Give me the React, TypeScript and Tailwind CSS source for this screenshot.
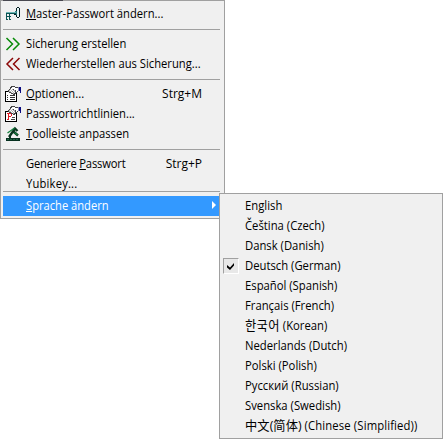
import type { ReactNode } from "react";

function KeyIcon() {
  return (
    <svg width="16" height="16" viewBox="0 0 16 16" shapeRendering="crispEdges">
      <path d="M1 6H11V7H1Z" fill="#6fb5b5" />
      <path d="M1 7H11V8H1Z" fill="#0b5555" />
      <path d="M1 8H2V14H1ZM2 10H4V11H2ZM2 13H3V14H2ZM4 8H5V14H4ZM5 10H6V11H5ZM5 13H6V14H5Z" fill="#0b5555" />
      <path d="M9 8H11V9H9Z" fill="#041c20" />
      <path d="M12 1H14V2H12ZM11 2H12V5H11ZM14 2H15V11H14ZM11 9H12V11H11ZM12 11H14V12H12Z" fill="#041c20" />
      <path d="M11 5H12V9H11ZM10 5H11V6H10Z" fill="#2c8080" />
      <path d="M12 2H14V11H12Z" fill="#e5f5f5" />
    </svg>
  );
}

function ChevronsIcon({ left = false }: { left?: boolean }) {
  return (
    <svg width="16" height="16" viewBox="0 0 16 16" fill="none" strokeWidth="1.5">
      {left ? (
        <path d="M8 2L2 8L8 14M14.5 2L8.5 8L14.5 14" stroke="#8b0808" />
      ) : (
        <path d="M1.5 2L7.5 8L1.5 14M8 2L14 8L8 14" stroke="#088b08" />
      )}
    </svg>
  );
}

function PropertiesIcon({ policy = false }: { policy?: boolean }) {
  return (
    <svg width="17" height="16" viewBox="0 0 17 16" shapeRendering="crispEdges">
      <path d="M.5 5.5H11.5V15.5H.5Z" fill="#fff" stroke="#000" />
      <path d="M6 0H10V1H13V6H12V7H11V8H10V9H8V8H6V7H4V6H3V4H4V3H5V1H6Z" fill="#444" />
      <path d="M7 1H10V2H13V5H12V6H11V4H9V3H6V2H7Z" fill="#fff" />
      <path d="M5 3H8V4H10V7H9V8H8V7H6V6H4V4H5Z" fill="#b4b4b4" />
      <path d="M6 3H7V4H6ZM5 4H6V5H5ZM7 4H8V5H7ZM6 5H7V6H6ZM8 5H9V6H8ZM7 6H8V7H7ZM9 6H10V7H9Z" fill="#fff" />
      <path d="M13 1H14V5H13Z" fill="#8b8bb5" />
      <path d="M14 1H16V7H15V5H14Z" fill="#0a0a80" />
      {policy ? (
        <>
          <path d="M2 7H6V8H7V10H6V11H4V14H2V13H3V8H2ZM4 8V10H6V8Z" fill="#e51c24" fillRule="evenodd" />
          <path d="M7 11H10V12H7ZM6 13H10V14H6Z" fill="#444" />
        </>
      ) : (
        <path d="M2 9H3V10H2ZM5 9H10V10H5ZM2 11H3V12H2ZM5 11H10V12H5ZM2 13H3V14H2ZM5 13H10V14H5Z" fill="#333" />
      )}
    </svg>
  );
}

function ToolbarIcon() {
  return (
    <svg width="16" height="16" viewBox="0 0 16 16" fill="none">
      <path d="M4 11L10 2.5L12.5 5M9 6L13 9.5" stroke="#07351e" strokeWidth="2.4" />
      <path d="M2.5 7L9.5 2M9.5 6.5L12.5 9" stroke="#15803e" strokeWidth="1.3" />
      <path d="M4 10L6 12M6 10L4 12" stroke="#0a3825" />
      <path d="M1 12H15V15H1Z" fill="#06301f" />
      <path d="M2.5 13.5H14" stroke="#39986a" strokeDasharray="1 2" />
    </svg>
  );
}

interface RowProps {
  icon?: ReactNode;
  children: ReactNode;
  shortcut?: string;
}

function Row({ icon, children, shortcut }: RowProps) {
  return (
    <div className="flex h-5 items-center pr-[22px] pl-1">
      <span className="flex w-[21px] shrink-0">{icon}</span>
      <span className="origin-left scale-x-[.935]">{children}</span>
      {shortcut && <span className="ml-auto origin-right">{shortcut}</span>}
    </div>
  );
}

function Separator() {
  return <div className="my-[4.5px] mr-1 ml-0.5 h-px bg-[#a0a0a0]" />;
}

const languages: { name: ReactNode; id: string; checked?: boolean }[] = [
  { id: "en", name: "English" },
  { id: "cs", name: "Čeština (Czech)" },
  { id: "da", name: "Dansk (Danish)" },
  { id: "de", name: "Deutsch (German)", checked: true },
  { id: "es", name: "Español (Spanish)" },
  { id: "fr", name: "Français (French)" },
  { id: "ko", name: <><span className="font-['Noto_Sans_CJK_KR',sans-serif] text-[13px] leading-4 tracking-[.4px]">한국어</span> (Korean)</> },
  { id: "nl", name: "Nederlands (Dutch)" },
  { id: "pl", name: "Polski (Polish)" },
  { id: "ru", name: "Русский (Russian)" },
  { id: "sv", name: "Svenska (Swedish)" },
  { id: "zh", name: <><span className="text-[13px] leading-4 tracking-[.1px]">中文(简体)</span> <span className="tracking-[.14px]">(Chinese (Simplified))</span></> },
];

export default function App() {
  return (
    <div className="relative h-[439px] w-[443px] overflow-hidden bg-white font-['Open_Sans','Noto_Sans_CJK_SC','Noto_Sans_CJK_KR',sans-serif] text-[12px] leading-5 whitespace-nowrap text-black">
      <div className="h-[219px] w-[225px] border border-[#a0a0a0] bg-[#f0f0f0] pt-[3px]">
        <div className="absolute top-0 left-[3px] h-px w-[60px] bg-[#484850]" />
        <Row icon={<KeyIcon />}><u>M</u>aster-Passwort ändern...</Row>
        <Separator />
        <Row icon={<ChevronsIcon />}>Sicherung erstellen</Row>
        <Row icon={<ChevronsIcon left />}>Wiederherstellen aus Sicherung...</Row>
        <Separator />
        <Row icon={<PropertiesIcon />} shortcut="Strg+M"><u>O</u>ptionen...</Row>
        <Row icon={<PropertiesIcon policy />}>Passwortrichtlinien...</Row>
        <Row icon={<ToolbarIcon />}><u>T</u>oolleiste anpassen</Row>
        <Separator />
        <Row shortcut="Strg+P"><span className="tracking-[-.2px]">Generiere <u>P</u>asswort</span></Row>
        <div className="h-[17px] overflow-hidden"><Row><span className="tracking-[.2px]">Yubikey...</span></Row></div>
        <div className="mr-1 mb-1 ml-0.5 h-px bg-[#a0a0a0]" />
        <div className="mr-0.5 ml-0.5 flex h-5 items-center bg-[#3399ff] pr-[6px] pl-[23px] text-white">
          <span className="origin-left scale-x-[.93]"><u>S</u>prache ändern</span>
          <svg className="mb-[3px] ml-auto" width="4" height="8" viewBox="0 0 4 8"><path d="M0 0L4 4L0 8Z" fill="#fff" /></svg>
        </div>
      </div>
      <div className="absolute top-[193px] left-[219px] h-[246px] w-[224px] border border-[#a0a0a0] bg-[#f0f0f0] pt-0.5">
        {languages.map(({ id, name, checked }) => (
          <div key={id} className="flex h-5 items-center pl-[3px]">
            <span className="mr-[6px] flex w-4 shrink-0">
              {checked && (
                <span className="flex size-4 items-center justify-center border border-t-[#a0a0a0] border-r-white border-b-white border-l-[#a0a0a0] bg-[#e8e8e8]">
                  <svg width="8" height="8" viewBox="0 0 8 8"><path d="M0 3L3 5.5L7 1V3.5L3 8L0 5.5Z" /></svg>
                </span>
              )}
            </span>
            <span className="origin-left scale-x-[.94]">{name}</span>
          </div>
        ))}
      </div>
    </div>
  );
}
